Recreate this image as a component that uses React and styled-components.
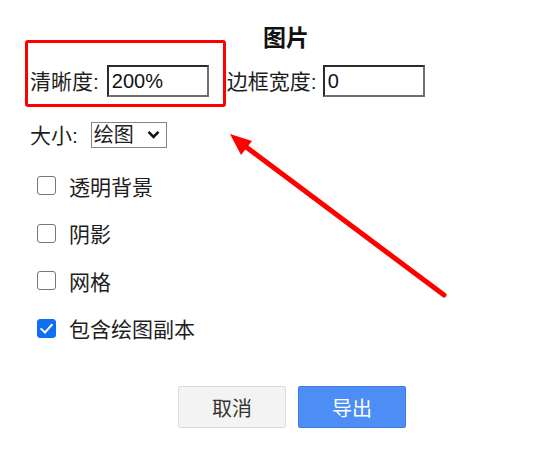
import React from "react";
import styled, { createGlobalStyle } from "styled-components";

const Global = createGlobalStyle`
  html, body { margin: 0; padding: 0; background: #fff; }
  body { font-family: "Liberation Sans", "Noto Sans CJK SC", sans-serif; color: #222; }
`;

const Page = styled.div`
  position: relative;
  width: 538px;
  height: 466px;
  overflow: hidden;
  background: #fff;
  font-size: 21px;
`;

const Title = styled.h2`
  margin: 0;
  padding: 25px 0 0 34px;
  height: 27px;
  line-height: 27px;
  text-align: center;
  font-size: 23px;
  font-weight: bold;
  color: #111;
`;

const FieldRow = styled.div`
  display: flex;
  align-items: center;
  padding-left: 30px;
  margin-top: ${(p) => p.$top}px;
  height: ${(p) => p.$h}px;
`;

const Label = styled.label`
  font-size: 21px;
  line-height: 1;
  margin-right: ${(p) => p.$gap}px;
  white-space: nowrap;
  color: #1e1e1e;
`;

const TextInput = styled.input`
  box-sizing: border-box;
  width: 102px;
  height: 32px;
  margin: 0 ${(p) => p.$after || 0}px 0 0;
  padding: 0 3px;
  font-family: "Liberation Sans", sans-serif;
  font-size: 20px;
  color: #111;
  border-style: solid;
  border-width: 2px;
  border-color: #2b2b2b #6e6e6e #6e6e6e #2b2b2b;
  outline: none;
  background: #fff;
`;

const SelectWrap = styled.div`
  position: relative;
  display: inline-block;
`;

const Select = styled.select`
  appearance: none;
  -webkit-appearance: none;
  box-sizing: border-box;
  width: 76px;
  height: 26px;
  padding: 0 0 0 2px;
  font-family: "Liberation Sans", "Noto Sans CJK SC", sans-serif;
  font-size: 20px;
  line-height: 24px;
  color: #222;
  border: 1px solid #858585;
  border-radius: 0;
  background: #fff;
  outline: none;
`;

const Chevron = styled.svg`
  position: absolute;
  right: 7px;
  top: 8px;
  width: 13px;
  height: 9px;
  pointer-events: none;
`;

const CheckList = styled.div`
  display: flex;
  flex-direction: column;
  margin-top: 14px;
`;

const CheckRow = styled.label`
  display: flex;
  align-items: center;
  height: 47.5px;
  padding-left: 37px;
  font-size: 21px;
  color: #1e1e1e;
`;

const Box = styled.input`
  appearance: none;
  -webkit-appearance: none;
  position: relative;
  box-sizing: border-box;
  width: 19px;
  height: 19px;
  margin: 0 13px 0 0;
  border: 1.5px solid #767676;
  border-radius: 3px;
  background: #fff;
  &:checked {
    background: #0f6ff0;
    border-color: #0f6ff0;
  }
  &:checked::after {
    content: "";
    position: absolute;
    left: 5px;
    top: 1px;
    width: 5px;
    height: 10px;
    border: solid #fff;
    border-width: 0 2.6px 2.6px 0;
    transform: rotate(42deg);
  }
`;

const Footer = styled.div`
  display: flex;
  justify-content: center;
  gap: 12px;
  padding-left: 46px;
  margin-top: 34px;
`;

const Button = styled.button`
  box-sizing: border-box;
  width: 108px;
  height: 42px;
  border-radius: 2px;
  font-family: "Liberation Sans", "Noto Sans CJK SC", sans-serif;
  font-size: 20px;
  cursor: pointer;
  border: 1px solid ${(p) => (p.$primary ? "#3f7fe4" : "#dcdcdc")};
  background: ${(p) => (p.$primary ? "#4c8df6" : "#f3f3f3")};
  color: ${(p) => (p.$primary ? "#fff" : "#333")};
`;

const Highlight = styled.div`
  position: absolute;
  left: 25px;
  top: 40px;
  width: 201px;
  height: 67px;
  box-sizing: border-box;
  border: 3px solid #ff0000;
  border-radius: 3px;
  pointer-events: none;
`;

const Arrow = styled.svg`
  position: absolute;
  left: 0;
  top: 0;
  width: 538px;
  height: 466px;
  pointer-events: none;
`;

export default function App() {
  return (
    <>
      <Global />
      <Page>
        <Title>图片</Title>
        <FieldRow $top={13} $h={32}>
          <Label $gap={8}>清晰度:</Label>
          <TextInput defaultValue="200%" $after={18} />
          <Label $gap={6}>边框宽度:</Label>
          <TextInput defaultValue="0" />
        </FieldRow>
        <FieldRow $top={25} $h={26}>
          <Label $gap={13}>大小:</Label>
          <SelectWrap>
            <Select defaultValue="drawing">
              <option value="drawing">绘图</option>
            </Select>
            <Chevron viewBox="0 0 13 9">
              <path d="M1.5 1.8 L6.5 6.8 L11.5 1.8" fill="none" stroke="#111" strokeWidth="2.6" />
            </Chevron>
          </SelectWrap>
        </FieldRow>
        <CheckList>
          <CheckRow><Box type="checkbox" />透明背景</CheckRow>
          <CheckRow><Box type="checkbox" />阴影</CheckRow>
          <CheckRow><Box type="checkbox" />网格</CheckRow>
          <CheckRow><Box type="checkbox" defaultChecked />包含绘图副本</CheckRow>
        </CheckList>
        <Footer>
          <Button>取消</Button>
          <Button $primary>导出</Button>
        </Footer>
        <Highlight />
        <Arrow viewBox="0 0 538 466">
          <line x1="444" y1="295" x2="242" y2="144" stroke="#ff0000" strokeWidth="5" strokeLinecap="round" />
          <polygon points="230,134 252,141 241,155" fill="#ff0000" />
        </Arrow>
      </Page>
    </>
  );
}
